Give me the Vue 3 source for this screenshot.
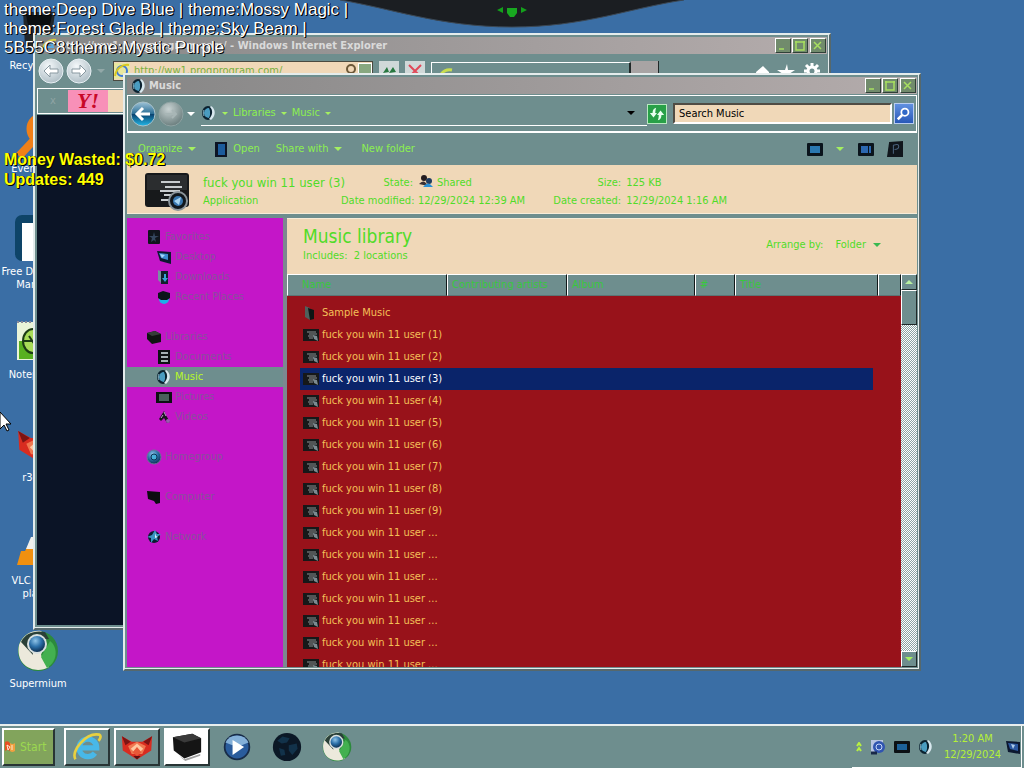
<template>
	<div class="screen">
		<!-- Shared icon shapes -->
		<svg class="sprite" aria-hidden="true">
			<defs>
				<radialGradient id="blueBall" cx="40%" cy="30%" r="75%">
					<stop offset="0" stop-color="#8fc4e8" />
					<stop offset=".5" stop-color="#2b6fa8" />
					<stop offset="1" stop-color="#0a2848" />
				</radialGradient>
				<radialGradient id="grayBall" cx="40%" cy="30%" r="75%">
					<stop offset="0" stop-color="#c8d2d2" />
					<stop offset="1" stop-color="#667a7a" />
				</radialGradient>
				<radialGradient id="whiteBall" cx="40%" cy="30%" r="80%">
					<stop offset="0" stop-color="#f4f8fa" />
					<stop offset="1" stop-color="#a8b8c0" />
				</radialGradient>
				<linearGradient id="backBall" x1="0" y1="0" x2="0" y2="1">
					<stop offset="0" stop-color="#9fc4d8" />
					<stop offset=".48" stop-color="#2c6f96" />
					<stop offset=".52" stop-color="#0a4470" />
					<stop offset="1" stop-color="#22b8e8" />
				</linearGradient>
			</defs>
			<symbol id="file" viewBox="0 0 44 38">
				<rect x="0" y="0" width="44" height="34" rx="3" fill="#17191b" />
				<rect x="2" y="2" width="40" height="15" fill="#2b2d2f" />
				<path d="M16 9h19M20 14h17M15 18h20M19 22h12M16 27h10" stroke="#c8cccf" stroke-width="2" />
				<circle cx="33" cy="28" r="9" fill="#11171c" stroke="#8a949a" stroke-width="2" />
				<circle cx="33" cy="28" r="5" fill="#3a78b0" />
				<path d="M29 28l7-4-2 8z" fill="#a8d4f0" />
			</symbol>
			<symbol id="fileSmall" viewBox="0 0 16 16">
				<rect x="0" y="2" width="16" height="12" fill="#161819" />
				<path d="M4 5h9M6 7h8M5 9h6M6 11h4" stroke="#8c9294" />
				<path d="M10 8l4 1 1 5-4-2z" fill="#7c8a90" />
			</symbol>
			<symbol id="music" viewBox="0 0 16 16">
				<ellipse cx="7" cy="8" rx="6" ry="7" fill="#0b2230" />
				<path d="M8 3a5 5 0 0 0 0 10l1-3V6z" fill="#4a9cc0" />
				<path d="M10 1c5 3 5 10 0 14l-2-1c4-4 4-9 1-12z" fill="#d8e8ee" />
				<path d="M3 5c-1 2-1 4 0 6" stroke="#8cb4c4" fill="none" />
			</symbol>
			<symbol id="star" viewBox="0 0 16 16">
				<rect x="2" y="1" width="12" height="14" rx="1" fill="#10141c" />
				<path d="M8 3l1 4h4L9 9l1 4-2-2-3 2 1-4-3-2h4z" fill="#34465e" />
			</symbol>
			<symbol id="desk" viewBox="0 0 16 16">
				<path d="M1 2l14 1v12L4 12z" fill="#0c1830" />
				<path d="M3 4l9 1v6L5 9z" fill="#3c8ad0" />
				<path d="M4 5l5 1-3 3z" fill="#a8d8f8" />
			</symbol>
			<symbol id="down" viewBox="0 0 16 16">
				<path d="M2 1l4 2v12l-4-4z" fill="#7890a0" />
				<path d="M5 2h7v13H5z" fill="#10202c" />
				<path d="M8 5h2v4h2l-3 4-3-4h2z" fill="#3aa0d8" />
			</symbol>
			<symbol id="recent" viewBox="0 0 16 16">
				<ellipse cx="8" cy="10" rx="5" ry="5" fill="#1cb0e8" />
				<path d="M2 4l5-2 7 2v5l-3 2H5L2 9z" fill="#0c1418" />
			</symbol>
			<symbol id="box" viewBox="0 0 16 16">
				<path d="M1 4l8-2 6 3v8l-9 2-5-5z" fill="#101412" />
				<path d="M1 4l8-2 6 3-9 2z" fill="#363e38" />
			</symbol>
			<symbol id="doc" viewBox="0 0 16 16">
				<rect x="2" y="1" width="12" height="14" fill="#0d1214" />
				<path d="M5 4h7M5 8h7M5 12h7" stroke="#a4b0b4" stroke-width="2" />
			</symbol>
			<symbol id="pic" viewBox="0 0 16 16">
				<rect x="0" y="3" width="16" height="11" fill="#0c1012" />
				<rect x="3" y="5" width="10" height="7" fill="#4a605c" />
			</symbol>
			<symbol id="video" viewBox="0 0 16 16">
				<path d="M3 10l5-8 3 6 3 5-3 1-3-5-3 3z" fill="#1a1420" />
				<circle cx="12" cy="12" r="2" fill="#9a5ab0" />
				<path d="M8 3l2 4M5 9l2-3" stroke="#c0a0d0" />
			</symbol>
			<symbol id="ball" viewBox="0 0 16 16">
				<circle cx="8" cy="8" r="7" fill="url(#blueBall)" stroke="#6a7898" />
				<circle cx="8" cy="8" r="3" fill="#48b0d8" stroke="#0c3450" />
			</symbol>
			<symbol id="computer" viewBox="0 0 16 16">
				<path d="M1 2l13 1v11l-4 1-2-3-6-2z" fill="#0c0c10" />
			</symbol>
			<symbol id="network" viewBox="0 0 16 16">
				<circle cx="8" cy="8" r="6" fill="#0b1c30" />
				<path d="M9 1l2 4h4l-4 3 1 4-4-2-3 4v-5L1 8l5-2z" fill="#3a94c0" />
				<path d="M9 4l1 3 2 1-3 1z" fill="#dff2f8" />
			</symbol>
			<symbol id="folder" viewBox="0 0 16 16">
				<path d="M2 1l5 2v12l-5-3z" fill="#50605c" />
				<path d="M5 3l6 2v9l-4 1z" fill="#0d1514" />
			</symbol>
			<symbol id="supermium" viewBox="0 0 42 42">
				<circle cx="21" cy="21" r="20" fill="#2c8a3c" />
				<path d="M2 15C6 4 16 0 24 1l6 6-6 18 8 12C18 45-2 36 2 15z" fill="#ece9dc" />
				<path d="M4 12C8 3 18 0 28 2l4 7-18 2 2 14z" fill="#2a4038" />
				<path d="M24 27l9-16c8 6 8 20-3 27z" fill="#43b050" />
				<circle cx="20" cy="14" r="10" fill="#d8e0e0" />
				<circle cx="20" cy="14" r="8" fill="url(#blueBall)" />
			</symbol>
			<symbol id="fox" viewBox="0 0 36 30">
				<path d="M1 3l11 6h12l11-6-1 16-16 10L2 19z" fill="#d82c20" />
				<path d="M1 3l10 6-6 4zM35 3L25 9l6 4z" fill="#7c1414" />
				<path d="M8 14l10-5 10 5-4 9H12z" fill="#f07850" />
				<path d="M18 11l7 6-7 7-7-7z" fill="#ffc8a0" />
				<path d="M18 15l5 6-5 4-5-4z" fill="#e85838" />
				<path d="M14 25h8l-4 4z" fill="#5c1010" />
			</symbol>
		</svg>

		<main class="desktop">
			<svg class="dock" viewBox="0 0 344 29" aria-hidden="true">
				<path d="M0 0h344C290 8 245 27 172 27S50 8 0 0z" fill="#1b1e22" />
				<path d="M0 0C50 8 100 27 172 27S290 8 344 0" fill="none" stroke="#3c4854" stroke-width="1" />
				<path d="M157 10l6-3v6zM187 10l-6-3v6z" fill="#14a01c" />
				<path d="M167 8h10v5l-3 4h-4l-3-4z" fill="#18a820" />
			</svg>

			<nav class="shortcuts" aria-label="Desktop">
				<a v-for="item in shortcuts" :key="item.label" href="#" class="shortcut">
					<svg viewBox="0 0 42 42" aria-hidden="true">
						<g v-if="item.icon === 'bin'">
							<path d="M6 0h32l-4 34-8 6H14l-6-6z" fill="#20262a" />
							<path d="M9 3h26l-2 10H11z" fill="#0b0e10" />
						</g>
						<g v-else-if="item.icon === 'search'">
							<circle cx="26" cy="14" r="13" fill="none" stroke="#f08018" stroke-width="7" />
							<path d="M18 24L2 41" stroke="#f08018" stroke-width="8" />
						</g>
						<g v-else-if="item.icon === 'fdm'">
							<rect x="-2" y="-3" width="46" height="46" rx="7" fill="#0e4468" />
							<path d="M5 5h28v8H18v6h14v8H18v16H5z" fill="#fff" />
						</g>
						<g v-else-if="item.icon === 'note'">
							<rect x="0" y="1" width="38" height="38" fill="#eaf4d8" />
							<rect x="2" y="20" width="34" height="18" fill="#58b020" />
							<ellipse cx="16" cy="20" rx="10" ry="12" fill="#a8dc58" stroke="#1c3c14" stroke-width="2" />
							<path d="M6 20h20M12 15l6 9" stroke="#1c3c14" stroke-width="2" />
							<path d="M0 1h38" stroke="#889" stroke-width="2" stroke-dasharray="2 2" />
						</g>
						<g v-else-if="item.icon === 'vlc'">
							<path d="M20 2l18 36H0l4-14h4z" fill="#f09010" />
							<path d="M14 10h12l4 12H9z" fill="#f0f0ec" />
						</g>
						<use v-else :href="'#' + item.icon" />
					</svg>
					<span>{{ item.label }}</span>
				</a>
			</nav>

			<!-- Browser behind -->
			<section class="window browser" aria-label="Windows Internet Explorer">
				<header class="titlebar">
					<svg class="i16" viewBox="0 0 16 16" aria-hidden="true">
						<path d="M2 13C0 8 8 0 15 2" stroke="#d8d040" stroke-width="2" fill="none" />
						<path d="M4 9h8a4 4 0 1 0-1 3" stroke="#58a8e0" stroke-width="2" fill="none" />
					</svg>
					<h2>http://ww1.progprogram.com/ - Windows Internet Explorer</h2>
					<button v-for="b in captionButtons" :key="b.name" class="cap" :class="b.name" :aria-label="b.name">
						<svg viewBox="0 0 12 11"><path :d="b.d" /></svg>
					</button>
				</header>
				<div class="browser-bar">
					<button class="round" aria-label="Back">
						<svg viewBox="0 0 26 26"><circle cx="13" cy="13" r="12" fill="url(#whiteBall)" stroke="#e8f0f4" /><path d="M12 7l-6 6 6 6v-4h8v-4h-8z" fill="#fff" stroke="#8898a0" /></svg>
					</button>
					<button class="round" aria-label="Forward">
						<svg viewBox="0 0 26 26"><circle cx="13" cy="13" r="12" fill="url(#whiteBall)" stroke="#e8f0f4" /><path d="M14 7l6 6-6 6v-4H6v-4h8z" fill="#fff" stroke="#8898a0" /></svg>
					</button>
					<i class="caret dim"></i>
					<label class="url">
						<svg class="i16" viewBox="0 0 16 16" aria-hidden="true"><rect width="16" height="16" fill="#e8e8a0" /><circle cx="8" cy="8" r="5" fill="none" stroke="#3c78d8" stroke-width="2" /><path d="M1 13C2 6 8 1 15 2" stroke="#d8c820" stroke-width="2" fill="none" /></svg>
						<input type="text" aria-label="Address" value="http://ww1.progprogram.com/" />
						<svg class="i16" viewBox="0 0 16 16" aria-hidden="true"><circle cx="9" cy="6" r="4" fill="none" stroke="#6c5838" stroke-width="2" /></svg>
						<i class="drop"></i>
					</label>
					<button class="small" aria-label="Refresh"><svg viewBox="0 0 20 20"><path d="M4 12l4-6 2 5zM10 12l4-6 3 5z" fill="#287840" /></svg></button>
					<button class="small" aria-label="Stop"><svg viewBox="0 0 20 20"><path d="M4 4l12 12M16 4L4 16" stroke="#e04858" stroke-width="2" /></svg></button>
					<div class="tab"><svg class="i16" viewBox="0 0 16 16" aria-hidden="true"><path d="M2 14C4 8 9 6 14 7" stroke="#c8dc50" stroke-width="3" fill="none" /></svg></div>
					<div class="newtab"></div>
					<svg class="tools" viewBox="0 0 66 18" aria-hidden="true">
						<path d="M1 10l7-6 6 6v8H2zM32 2l1 6h7l-6 4 2 6-5-4-5 4 2-6-6-4h8z" fill="#fff" />
						<circle cx="57" cy="9" r="4" fill="none" stroke="#fff" stroke-width="3" />
						<path d="M57 1v4M51 3l3 3M63 3l-3 3M49 9h4M61 9h4" stroke="#fff" stroke-width="3" />
					</svg>
				</div>
				<div class="yahoo">
					<button aria-label="Close toolbar">x</button>
					<b>Y!</b>
					<span></span>
				</div>
				<div class="page"></div>
			</section>

			<!-- Music library -->
			<section class="window explorer" aria-label="Music">
				<header class="titlebar">
					<svg class="i16" aria-hidden="true"><use href="#music" /></svg>
					<h2>Music</h2>
					<button v-for="b in captionButtons" :key="b.name" class="cap" :class="b.name" :aria-label="b.name">
						<svg viewBox="0 0 12 11"><path :d="b.d" /></svg>
					</button>
				</header>

				<div class="navbar">
					<button class="round" aria-label="Back">
						<svg viewBox="0 0 26 26"><circle cx="13" cy="13" r="12" fill="url(#backBall)" stroke="#a8c0c8" /><path d="M20 13H7m6-6l-6 6 6 6" stroke="#fff" stroke-width="3" fill="none" /></svg>
					</button>
					<button class="round" aria-label="Forward">
						<svg viewBox="0 0 26 26"><circle cx="13" cy="13" r="12" fill="url(#grayBall)" stroke="#8ea2a2" /><path d="M7 13h11m-4-4l4 4-4 4" stroke="#a8b6b6" stroke-width="2" fill="none" /></svg>
					</button>
					<i class="caret white"></i>
					<div class="address">
						<svg class="i16" aria-hidden="true"><use href="#music" /></svg>
						<i class="caret tiny"></i>
						<a href="#">Libraries</a>
						<i class="caret tiny"></i>
						<a href="#">Music</a>
						<i class="caret tiny"></i>
						<i class="caret black"></i>
					</div>
					<button class="refresh" aria-label="Refresh">
						<svg viewBox="0 0 18 18"><path d="M8 2Q4 3 4 8H1l4 5 4-5H7q0-3 1-6zM10 16q4-1 4-6h3l-4-5-4 5h2q0 3-1 6z" fill="#e8fff0" /></svg>
					</button>
					<form class="search" @submit.prevent>
						<input v-model="query" type="text" aria-label="Search" />
						<button aria-label="Search">
							<svg viewBox="0 0 18 18"><circle cx="10" cy="7" r="4" fill="#3068c8" stroke="#fff" stroke-width="2" /><path d="M7 10l-5 5" stroke="#fff" stroke-width="3" /></svg>
						</button>
					</form>
				</div>

				<div class="toolbar">
					<button>Organize <i class="caret"></i></button>
					<button class="open">
						<svg viewBox="0 0 12 15" aria-hidden="true"><rect width="12" height="15" fill="#0c1424" /><rect x="3" y="2" width="7" height="11" fill="#1c5c9c" /></svg>
						Open
					</button>
					<button>Share with <i class="caret"></i></button>
					<button class="last">New folder</button>
					<div class="views">
						<button aria-label="Change view"><svg viewBox="0 0 16 13"><rect width="16" height="13" rx="1" fill="#0a141c" /><rect x="3" y="3" width="10" height="7" fill="#2a78b0" /></svg></button>
						<i class="caret"></i>
						<button class="preview" aria-label="Preview pane"><svg viewBox="0 0 16 13"><rect width="16" height="13" rx="1" fill="#0a141c" /><path d="M3 3h7v7H3zM11 3h2v7h-2z" fill="#2c68b0" /></svg></button>
						<button class="help" aria-label="Help"><svg viewBox="0 0 15 15"><path d="M2 1l13-1v15H0z" fill="#10161c" /><path d="M6 12V4q5-2 5 1T7 8" stroke="#48607a" fill="none" /></svg></button>
					</div>
				</div>

				<div class="details">
					<svg class="thumb" aria-hidden="true"><use href="#file" /></svg>
					<div class="about">
						<strong>fuck you win 11 user (3)</strong>
						<span>Application</span>
					</div>
					<dl>
						<dt>State:</dt>
						<dd>
							<svg class="i16" viewBox="0 0 16 16" aria-hidden="true"><circle cx="6" cy="4" r="3" fill="#241c20" /><path d="M1 10q5-6 9 2z" fill="#3a3034" /><circle cx="11" cy="7" r="3" fill="#203c60" /><path d="M5 13q5-7 10 0z" fill="#2890d8" /></svg>
							Shared
						</dd>
						<dt>Date modified:</dt>
						<dd>12/29/2024 12:39 AM</dd>
					</dl>
					<dl>
						<dt>Size:</dt>
						<dd>125 KB</dd>
						<dt>Date created:</dt>
						<dd>12/29/2024 1:16 AM</dd>
					</dl>
				</div>

				<div class="body">
					<nav class="tree" aria-label="Folders">
						<ul v-for="group in tree" :key="group[0].label">
							<li v-for="(node, i) in group" :key="node.label">
								<a href="#" :class="{ child: i > 0, active: node.label === 'Music' }">
									<svg class="i16" aria-hidden="true"><use :href="'#' + node.icon" /></svg>
									{{ node.label }}
								</a>
							</li>
						</ul>
					</nav>

					<div class="library">
						<div class="heading">
							<div>
								<h1>Music library</h1>
								<p>Includes:&nbsp; 2 locations</p>
							</div>
							<div class="arrange">
								<span>Arrange by:</span>
								<button>Folder <i class="caret"></i></button>
							</div>
						</div>
						<div class="listing">
							<div class="files">
								<table>
									<colgroup>
										<col class="c-name" />
										<col class="c-artist" />
										<col class="c-album" />
										<col class="c-num" />
										<col class="c-title" />
										<col />
									</colgroup>
									<thead>
										<tr>
											<th>Name</th>
											<th>Contributing artists</th>
											<th>Album</th>
											<th>#</th>
											<th>Title</th>
											<th></th>
										</tr>
									</thead>
									<tbody>
										<tr v-for="(file, i) in files" :key="i" :class="{ selected: i === selected }" @click="selected = i">
											<td>
												<svg class="i16" aria-hidden="true"><use :href="i ? '#fileSmall' : '#folder'" /></svg>
												<span>{{ file }}</span>
											</td>
											<td></td>
											<td></td>
											<td></td>
											<td></td>
											<td></td>
										</tr>
									</tbody>
								</table>
							</div>
							<div class="scrollbar">
								<button aria-label="Scroll up"><i class="caret up"></i></button>
								<div class="grip"></div>
								<button class="bottom" aria-label="Scroll down"><i class="caret"></i></button>
							</div>
						</div>
					</div>
				</div>
			</section>
		</main>

		<footer class="taskbar">
			<button class="start">
				<svg viewBox="0 0 12 16" aria-hidden="true"><path d="M1 3q3-2 5 1v8q-3-2-5 0z" fill="#e85020" /><path d="M6 4q3 2 5 0v8q-3 2-5 0z" fill="#f0a040" /><path d="M3 6l3 2-2 3zM8 6v5" stroke="#ffe8d0" fill="none" /></svg>
				Start
			</button>
			<button class="task raised" aria-label="Internet Explorer">
				<svg viewBox="0 0 34 34"><path d="M9 18h19a10 10 0 1 0-2 6" fill="none" stroke="#48b8e8" stroke-width="6" /><path d="M4 31C-2 22 16 0 31 3c3 2 0 6-1 7" fill="none" stroke="#e8d040" stroke-width="3" /></svg>
			</button>
			<button class="task raised" aria-label="r3dfox"><svg><use href="#fox" /></svg></button>
			<button class="task pressed" aria-label="Explorer">
				<svg viewBox="0 0 34 34"><path d="M1 6l22-4 10 5v16L14 30 2 21z" fill="#151515" /><path d="M1 6l22-4 10 5-19 5z" fill="#3a3a3a" /><path d="M8 27l6 4 18-6v2l-17 6z" fill="#a0a0a0" /></svg>
			</button>
			<button class="task" aria-label="Media Player">
				<svg viewBox="0 0 34 34"><circle cx="17" cy="17" r="14" fill="#2a5c9c" stroke="#182c48" stroke-width="2" /><path d="M4 12a14 13 0 0 1 26 0q-13 7-26 0z" fill="#84b0d8" /><path d="M12 9l13 8-13 9z" fill="#fff" /></svg>
			</button>
			<button class="task" aria-label="Globe">
				<svg viewBox="0 0 34 34"><circle cx="17" cy="17" r="16" fill="#0b1826" /><path d="M6 10l6-5 8 2-3 5-6 1zM19 15l9-2 1 6-6 7-4-5zM8 18l6 2 1 6-5 1z" fill="#12324a" /></svg>
			</button>
			<button class="task" aria-label="Supermium"><svg><use href="#supermium" /></svg></button>

			<div class="tray">
				<button aria-label="Show hidden icons"><svg class="chev" viewBox="0 0 6 10"><path d="M1 4l2-3 2 3M1 9l2-3 2 3" fill="none" stroke="#b8f040" stroke-width="2" /></svg></button>
				<svg class="i16" viewBox="0 0 16 16" aria-hidden="true"><rect x="1" y="1" width="12" height="12" fill="#b8c4e0" /><circle cx="9" cy="8" r="6" fill="#3054b0" /><circle cx="9" cy="8" r="3" fill="none" stroke="#c8d8f8" /><path d="M1 14h6" stroke="#182848" stroke-width="3" /></svg>
				<svg class="i16" viewBox="0 0 16 16" aria-hidden="true"><rect x="0" y="2" width="16" height="12" rx="1" fill="#0c1014" /><rect x="3" y="5" width="10" height="6" fill="#1c6098" /></svg>
				<svg class="i16" aria-hidden="true"><use href="#music" /></svg>
				<time><span>1:20 AM</span><span>12/29/2024</span></time>
				<svg class="i16" viewBox="0 0 16 16" aria-hidden="true"><path d="M1 2l14 1v12l-12-2z" fill="#0c1830" /><path d="M3 4l10 1v7l-8-2z" fill="#2c58a0" /><path d="M6 5l4 1-2 4z" fill="#b0cce8" /></svg>
			</div>
		</footer>

		<!-- Stream overlay -->
		<div class="overlay themes">
			<div v-for="line in themes" :key="line">{{ line }}</div>
		</div>
		<div class="overlay stats">
			<div>Money Wasted: $0.72</div>
			<div>Updates: 449</div>
		</div>
		<svg class="cursor" viewBox="0 0 12 20" aria-hidden="true">
			<path d="M0 0l11 12H6l3 6-2 1-3-6-4 4z" fill="#fff" stroke="#000" />
		</svg>
	</div>
</template>

<script setup>
import { ref } from 'vue'

const query = ref('Search Music')
const selected = ref(3)

const themes = [
	'theme:Deep Dive Blue | theme:Mossy Magic |',
	'theme:Forest Glade | theme:Sky Beam |',
	'5B55C8:theme:Mystic Purple'
]

const shortcuts = [
	{ label: 'Recycle Bin', icon: 'bin' },
	{ label: 'Everything', icon: 'search' },
	{ label: 'Free Download Manager', icon: 'fdm' },
	{ label: 'Notepad++', icon: 'note' },
	{ label: 'r3dfox', icon: 'fox' },
	{ label: 'VLC media player', icon: 'vlc' },
	{ label: 'Supermium', icon: 'supermium' }
]

const captionButtons = [
	{ name: 'minimize', d: 'M2 9h5' },
	{ name: 'maximize', d: 'M1 2h10M2 1v9h8V1' },
	{ name: 'close', d: 'M2 2l7 7M9 2l-7 7' }
]

const tree = [
	[
		{ label: 'Favorites', icon: 'star' },
		{ label: 'Desktop', icon: 'desk' },
		{ label: 'Downloads', icon: 'down' },
		{ label: 'Recent Places', icon: 'recent' }
	],
	[
		{ label: 'Libraries', icon: 'box' },
		{ label: 'Documents', icon: 'doc' },
		{ label: 'Music', icon: 'music' },
		{ label: 'Pictures', icon: 'pic' },
		{ label: 'Videos', icon: 'video' }
	],
	[{ label: 'Homegroup', icon: 'ball' }],
	[{ label: 'Computer', icon: 'computer' }],
	[{ label: 'Network', icon: 'network' }]
]

const files = ['Sample Music']
for (let i = 1; i < 17; i++) {
	files.push('fuck you win 11 user ' + (i < 10 ? `(${i})` : '...'))
}
</script>

<style>
body {
	margin: 0;
	overflow: hidden;
}
</style>

<style scoped>
* {
	box-sizing: border-box;
}
.screen {
	position: relative;
	display: flex;
	flex-direction: column;
	height: 100vh;
	overflow: hidden;
	background: #3a6ea5;
	color: #50dc28;
	font: 11px/16px "DejaVu Sans Condensed", Tahoma, sans-serif;
}
button,
input {
	font: inherit;
	color: inherit;
	background: none;
	border: 0;
	padding: 0;
	margin: 0;
}
a {
	color: inherit;
	text-decoration: none;
}
h1,
h2,
p,
ul,
dl,
dd {
	margin: 0;
	padding: 0;
}
ul {
	list-style: none;
}
svg {
	display: block;
	flex: none;
}
.sprite {
	position: absolute;
	width: 0;
	height: 0;
}
.i16 {
	width: 16px;
	height: 16px;
}
.caret {
	flex: none;
	border: 4px solid transparent;
	border-top-color: #a4f060;
	border-bottom: 0;
}
.caret.tiny {
	border-width: 3px;
	border-bottom: 0;
}
.caret.white {
	border-top-color: #fff;
}
.caret.dim {
	border-top-color: #92a8a8;
}
.caret.black {
	border-top-color: #000;
	margin-left: auto;
}
.caret.up {
	border-top: 0;
	border-bottom: 4px solid #b8f0a0;
}

/* Desktop */
.desktop {
	position: relative;
	flex: 1;
	min-height: 0;
}
.dock {
	position: absolute;
	top: 0;
	left: 50%;
	width: 344px;
	margin-left: -172px;
}
.shortcuts {
	width: 76px;
	padding-top: 12px;
}
.shortcut {
	display: flex;
	flex-direction: column;
	align-items: center;
	gap: 5px;
	height: 103px;
	color: #fff;
	line-height: 13px;
	text-align: center;
}
.shortcut svg {
	width: 42px;
	height: 42px;
	overflow: visible;
}

/* Windows */
.window {
	position: absolute;
	display: flex;
	flex-direction: column;
	padding: 2px;
	background: #6e8e8e;
	border: 2px solid #e4ecec;
	border-right-color: #56686c;
	border-bottom-color: #56686c;
	box-shadow: inset -1px -1px #e4ecec;
}
.browser {
	left: 33px;
	right: 193px;
	top: 33px;
	bottom: 94px;
}
.explorer {
	left: 123px;
	right: 103px;
	top: 73px;
	bottom: 53px;
}
.titlebar {
	display: flex;
	align-items: center;
	flex: none;
	height: 17px;
	padding: 0 1px 0 4px;
	background: linear-gradient(90deg, #868686, #b4acac);
}
.titlebar h2 {
	flex: 1;
	margin-left: 2px;
	color: #dadada;
	font-size: 11px;
	font-weight: bold;
	white-space: nowrap;
	overflow: hidden;
}
.cap {
	width: 16px;
	height: 15px;
	margin-left: 1px;
	padding: 1px;
	background: #718b6c;
	border: 1px solid #fff;
	border-right-color: #304038;
	border-bottom-color: #304038;
}
.cap.close {
	margin-left: 2px;
}
.cap path {
	fill: none;
	stroke: #a8e060;
	stroke-width: 1.5;
}
.round {
	flex: none;
	width: 26px;
	height: 26px;
	margin-right: 2px;
}

/* Browser */
.browser-bar {
	display: flex;
	align-items: center;
	height: 34px;
	padding-left: 1px;
}
.browser-bar .caret {
	margin: 0 8px 0 3px;
}
.url {
	display: flex;
	align-items: center;
	width: 260px;
	height: 20px;
	background: #f0d8b8;
	border: 1px solid #4a4a40;
}
.url input {
	flex: 1;
	min-width: 0;
	margin-left: 4px;
	color: #78b040;
	font-size: 11px;
}
.drop {
	width: 14px;
	height: 16px;
	background: #88a880;
	border: 1px solid #fff;
}
.small {
	width: 20px;
	height: 20px;
	margin-left: 6px;
	background: #d0d8d8;
}
.tab {
	flex: 1;
	max-width: 200px;
	height: 19px;
	margin-left: 6px;
	padding-left: 6px;
	border: 1px solid #fff;
	border-right: 2px solid #202828;
}
.newtab {
	width: 28px;
	height: 20px;
	background: #a8a4a4;
	border-right: 1px solid #202828;
}
.tools {
	width: 66px;
	margin: 0 6px 0 auto;
}
.yahoo {
	display: flex;
	align-items: center;
	height: 26px;
	border: 1px solid #fff;
	border-width: 1px 0 1px 1px;
}
.yahoo button {
	width: 30px;
	color: #8ea4a4;
}
.yahoo b {
	width: 40px;
	background: #f890b8;
	color: #c80828;
	font: italic bold 22px/22px "Liberation Serif", serif;
	text-align: center;
}
.yahoo span {
	flex: 1;
	height: 22px;
	background: #f0d8b8;
}
.page {
	flex: 1;
	margin: 1px 1px 1px 0;
	background: #0b1426;
}

/* Explorer */
.navbar {
	display: flex;
	align-items: center;
	height: 38px;
	margin-top: 1px;
	padding: 0 2px;
	border: 1px solid #fff;
	border-bottom-width: 2px;
}
.navbar > .caret {
	margin-left: 1px;
}
.address {
	display: flex;
	flex: 1;
	align-items: center;
	gap: 5px;
	height: 24px;
	margin-left: 6px;
	padding: 0 12px 0 0;
	border-bottom: 1px solid #fff;
}
.address a,
.toolbar {
	color: #8cf050;
}
.refresh {
	width: 20px;
	height: 20px;
	padding: 1px;
	background: #28a048;
	border: 1px solid #b8e8c0;
}
.search {
	display: flex;
	flex: 0 1 241px;
	gap: 2px;
	height: 21px;
	margin-left: 6px;
}
.search input {
	flex: 1;
	min-width: 0;
	padding-left: 4px;
	background: #f0d8b8;
	border: 2px solid #fff;
	border-top-color: #504c44;
	border-left-color: #504c44;
	color: #000;
}
.search button {
	width: 20px;
	padding: 1px;
	background: linear-gradient(#6090e0, #2858b8);
	border: 1px solid #b8ccf0;
}
.toolbar {
	display: flex;
	align-items: center;
	height: 32px;
	padding-left: 11px;
}
.toolbar button {
	display: flex;
	align-items: center;
	gap: 6px;
	margin-right: 19px;
	white-space: nowrap;
}
.toolbar .open {
	margin-right: 16px;
}
.open svg {
	width: 12px;
	height: 15px;
}
.views {
	display: flex;
	align-items: center;
	gap: 13px;
	margin-left: auto;
	padding-right: 14px;
}
.views button {
	width: 16px;
	margin: 0;
}
.views button svg {
	width: 16px;
}
.views .preview {
	margin-left: 1px;
}
.details {
	display: flex;
	align-items: center;
	flex: none;
	height: 49px;
	padding: 5px 0 0 18px;
	background: #f0d8b8;
	border-bottom: 1px solid #f8ecd8;
	white-space: nowrap;
}
.thumb {
	width: 44px;
	height: 38px;
}
.about {
	display: flex;
	flex-direction: column;
	width: 138px;
	margin-left: 14px;
	line-height: 18px;
}
.about strong {
	font-size: 13px;
	font-weight: normal;
}
.details dl {
	display: grid;
	grid-template-columns: 72px auto;
	column-gap: 5px;
	margin-right: 24px;
	line-height: 18px;
}
.details dt {
	text-align: right;
}
.details dd {
	display: flex;
	gap: 3px;
}
.body {
	display: flex;
	flex: 1;
	min-height: 0;
	margin-top: 4px;
}
.tree {
	flex: none;
	width: 160px;
	padding-top: 9px;
	background: #c416c8;
	border-right: 4px solid #7c8890;
	overflow: hidden;
}
.tree ul {
	margin-bottom: 20px;
}
.tree a {
	display: flex;
	align-items: center;
	gap: 3px;
	height: 20px;
	padding-left: 19px;
	color: #88509c;
}
.tree a.child {
	padding-left: 29px;
}
.tree a.active {
	background: #6e8e8e;
	color: #b8f828;
}
.library {
	display: flex;
	flex-direction: column;
	flex: 1;
	min-width: 0;
}
.heading {
	display: flex;
	flex: none;
	justify-content: space-between;
	height: 56px;
	padding: 5px 36px 0 16px;
	background: #f0d8b8;
	border-top: 1px solid #f8ecd8;
}
.heading h1 {
	font-size: 19px;
	font-weight: normal;
	line-height: 24px;
}
.arrange {
	display: flex;
	gap: 12px;
	padding-top: 13px;
}
.arrange button {
	display: flex;
	align-items: center;
	gap: 7px;
	height: 16px;
}
.arrange .caret {
	border-top-color: #38b850;
}
.listing {
	display: flex;
	flex: 1;
	min-height: 0;
}
.files {
	flex: 1;
	min-width: 0;
	background: #98121a;
	overflow: hidden;
}
table {
	width: 100%;
	table-layout: fixed;
	border-spacing: 0;
}
.c-name {
	width: 160px;
}
.c-artist {
	width: 120px;
}
.c-album {
	width: 128px;
}
.c-num {
	width: 40px;
}
.c-title {
	width: 143px;
}
th {
	height: 22px;
	padding: 0 0 0 4px;
	background: #6e8e8e;
	border: 1px solid #fff;
	border-right-color: #101818;
	border-bottom-color: #5c7474;
	color: #38c83c;
	font-weight: normal;
	text-align: left;
	white-space: nowrap;
}
th:first-child {
	padding-left: 14px;
}
tbody::before {
	content: "";
	display: block;
	height: 6px;
}
td {
	height: 22px;
	padding: 0;
	color: #f4c058;
	white-space: nowrap;
}
td:first-child {
	display: flex;
	align-items: center;
	gap: 3px;
	padding-left: 3px;
	border-left: 13px solid transparent;
	background-clip: padding-box;
}
td:nth-child(5) {
	border-right: 5px solid transparent;
	background-clip: padding-box;
}
.selected td:not(:last-child) {
	background-color: #0a246a;
	color: #fff;
}
.scrollbar {
	display: flex;
	flex-direction: column;
	flex: none;
	width: 16px;
	background: repeating-conic-gradient(#fff 0 25%, #8ca4a4 0 50%) 0 0 / 2px 2px;
}
.scrollbar button,
.grip {
	display: flex;
	align-items: center;
	justify-content: center;
	height: 16px;
	background: #6e8e8e;
	border: 1px solid #fff;
	border-right-color: #202828;
	border-bottom-color: #202828;
}
.grip {
	height: 35px;
}
.scrollbar .bottom {
	margin-top: auto;
}

/* Taskbar */
.taskbar {
	display: flex;
	align-items: center;
	flex: none;
	gap: 4px;
	height: 44px;
	padding: 0 2px;
	background: #6e8e8e;
	border-top: 2px solid #e8eeee;
}
.start,
.raised,
.pressed {
	border: 2px solid #fff;
	border-right-color: #283434;
	border-bottom-color: #283434;
}
.start {
	display: flex;
	align-items: center;
	gap: 4px;
	width: 53px;
	height: 38px;
	margin-right: 5px;
	background: #82a45c;
	color: #9cd850;
	font-size: 12px;
}
.start svg {
	width: 12px;
}
.task {
	display: flex;
	align-items: center;
	justify-content: center;
	width: 46px;
	height: 38px;
}
.task svg {
	width: 32px;
	height: 30px;
}
.pressed {
	background: #fff;
}
.tray {
	display: flex;
	align-items: center;
	align-self: stretch;
	gap: 8px;
	margin-left: auto;
	padding-left: 4px;
	border-right: 1px solid #fff;
	border-bottom: 1px solid #fff;
	color: #b4f038;
}
.chev {
	width: 6px;
	height: 10px;
}
time {
	display: flex;
	flex-direction: column;
	margin: 0 -4px 0 2px;
	text-align: center;
}

/* Overlay */
.overlay {
	position: absolute;
	left: 4px;
	pointer-events: none;
	font-family: "Liberation Sans", Arial, sans-serif;
	white-space: nowrap;
	text-shadow: 1px 1px #000, 1px 0 #000;
}
.themes {
	top: 0;
	color: #fff;
	font-size: 17px;
	line-height: 19px;
}
.stats {
	top: 150px;
	color: #ff0;
	font-size: 16px;
	font-weight: bold;
	line-height: 20px;
}
.cursor {
	position: absolute;
	left: 0;
	top: 412px;
	width: 12px;
	height: 20px;
}
</style>
